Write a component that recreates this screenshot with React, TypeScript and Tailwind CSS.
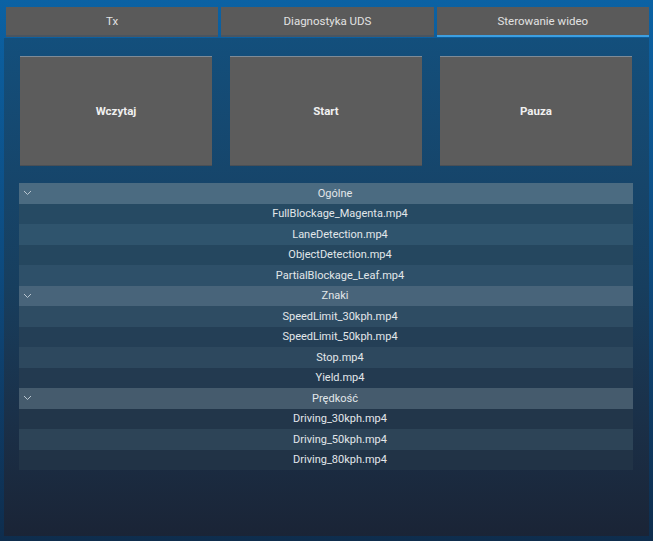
import React from "react";

const rows: { label: string; header?: boolean; bg: string }[] = [
  { label: "Ogólne", header: true, bg: "bg-[#4b6b81]" },
  { label: "FullBlockage_Magenta.mp4", bg: "bg-[#264a63]" },
  { label: "LaneDetection.mp4", bg: "bg-[#2f546d]" },
  { label: "ObjectDetection.mp4", bg: "bg-[#25475f]" },
  { label: "PartialBlockage_Leaf.mp4", bg: "bg-[#2e5069]" },
  { label: "Znaki", header: true, bg: "bg-[#48647a]" },
  { label: "SpeedLimit_30kph.mp4", bg: "bg-[#2e4c63]" },
  { label: "SpeedLimit_50kph.mp4", bg: "bg-[#243f56]" },
  { label: "Stop.mp4", bg: "bg-[#2d485e]" },
  { label: "Yield.mp4", bg: "bg-[#233a50]" },
  { label: "Prędkość", header: true, bg: "bg-[#455b6d]" },
  { label: "Driving_30kph.mp4", bg: "bg-[#22364a]" },
  { label: "Driving_50kph.mp4", bg: "bg-[#2d4457]" },
  { label: "Driving_80kph.mp4", bg: "bg-[#213346]" },
];

function Chevron() {
  return (
    <svg width="9" height="6" viewBox="0 0 9 6" className="absolute left-[4px] top-[7px]">
      <polyline points="1,1 4.5,4.5 8,1" fill="none" stroke="#b9c6d0" strokeWidth="1" />
    </svg>
  );
}

export default function App() {
  const tabs = ["Tx", "Diagnostyka UDS", "Sterowanie wideo"];
  return (
    <div
      className="w-[653px] h-[541px] flex flex-col bg-gradient-to-b from-[#0b62a4] via-[#0d4a7e] to-[#0e2d4d] overflow-hidden"
      style={{ fontFamily: "Roboto, 'Noto Sans', sans-serif" }}
    >
      <div className="flex gap-[3px] pl-[6px] pr-[4px] pt-[7px] h-[38px] shrink-0">
        {tabs.map((t, i) => (
          <div
            key={t}
            className={`flex-1 h-[30px] flex items-center justify-center text-[11.5px] text-[#e2e2e2] bg-[#5a5a5a] ${
              i === 2 ? "border-b-2 border-[#3d9fe0]" : "border-b-2 border-[#4a5560]"
            }`}
          >
            <span className="mb-[-1px]">{t}</span>
          </div>
        ))}
      </div>
      <div className="mx-[4px] h-[498px] bg-gradient-to-b from-[#134f7c] via-[#173e5e] to-[#1a2436] pl-[15px] pr-[16px] pt-[18px]">
        <div className="flex gap-[18px] px-[1px]">
          {["Wczytaj", "Start", "Pauza"].map((b) => (
            <div
              key={b}
              className="flex-1 h-[110px] bg-[#5c5c5c] border-t border-[#7f8b96] border-b border-b-[#4a4f55] flex items-center justify-center text-[11.5px] font-bold text-[#f0f0f0]"
            >
              <span className="mt-[1px]">{b}</span>
            </div>
          ))}
        </div>
        <div className="mt-[17px] flex flex-col">
          {rows.map((r) => (
            <div
              key={r.label}
              className={`relative h-[20.5px] flex items-center justify-center text-[11px] text-[#e2e7ea] ${r.bg} ${
                r.header ? "pl-[18px]" : "pl-[28px]"
              }`}
            >
              {r.header && <Chevron />}
              <span className="mt-[1px]">{r.label}</span>
            </div>
          ))}
        </div>
      </div>
    </div>
  );
}
